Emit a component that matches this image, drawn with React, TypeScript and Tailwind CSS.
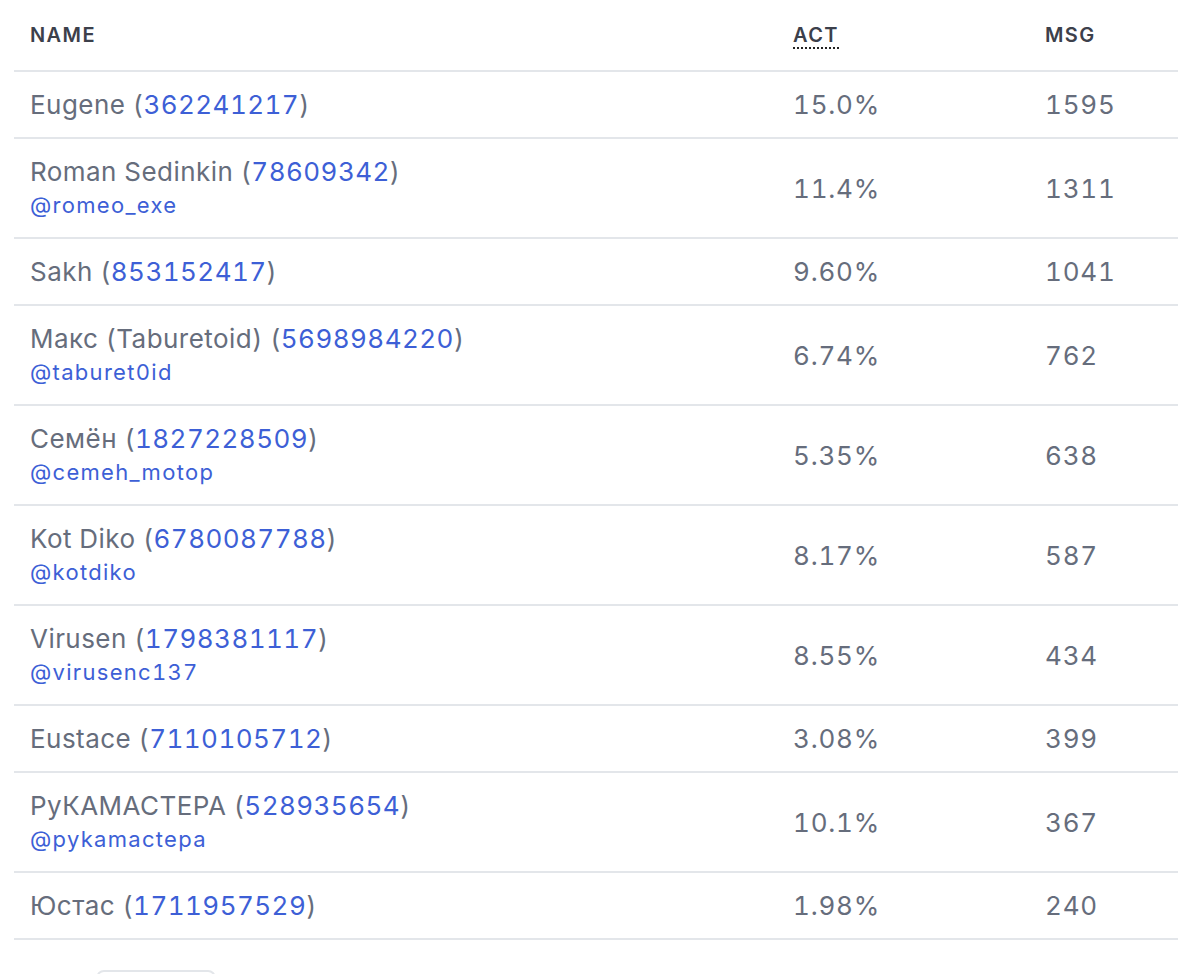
const rows = [
  { name: "Eugene", id: "362241217", act: "15.0%", msg: "1595" },
  { name: "Roman Sedinkin", id: "78609342", handle: "@romeo_exe", act: "11.4%", msg: "1311" },
  { name: "Sakh", id: "853152417", act: "9.60%", msg: "1041" },
  { name: "Макс (Taburetoid)", id: "5698984220", handle: "@taburet0id", act: "6.74%", msg: "762" },
  { name: "Семён", id: "1827228509", handle: "@cemeh_motop", act: "5.35%", msg: "638" },
  { name: "Kot Diko", id: "6780087788", handle: "@kotdiko", act: "8.17%", msg: "587" },
  { name: "Virusen", id: "1798381117", handle: "@virusenc137", act: "8.55%", msg: "434" },
  { name: "Eustace", id: "7110105712", act: "3.08%", msg: "399" },
  { name: "РуКАМАСТЕРА", id: "528935654", handle: "@pykamactepa", act: "10.1%", msg: "367" },
  { name: "Юстас", id: "1711957529", act: "1.98%", msg: "240" },
];

const App = () => {
  return (
    <div className="min-h-screen bg-white pl-[14px] font-['Inter',sans-serif]">
      <table className="w-full border-collapse text-left">
        <thead>
          <tr className="border-b-2 border-[#e3e6ea]">
            <th className="w-[763px] h-[71px] px-4 text-[20px] font-semibold tracking-[0.07em] text-[#3c404b]">NAME</th>
            <th className="w-[252px] px-4 text-[20px] font-semibold tracking-[0.07em] text-[#3c404b]">
              <span className="border-b-2 border-dotted border-[#222]">ACT</span>
            </th>
            <th className="px-4 text-[20px] font-semibold tracking-[0.07em] text-[#3c404b]">MSG</th>
          </tr>
        </thead>
        <tbody>
          {rows.map((r) => (
            <tr key={r.id} className="border-b-2 border-[#e3e6ea] text-[#666d7c] tabular-nums">
              <td className="px-4 py-[15px]">
                <div className="text-[26px] leading-[35px] tracking-[0.45px]">
                  {r.name} (<span className="text-[#3d5fd6]">{r.id}</span>)
                </div>
                {r.handle && (
                  <div className="text-[22px] leading-[33px] tracking-[1.3px] text-[#3d5fd6]">{r.handle}</div>
                )}
              </td>
              <td className="px-4 text-[26px] tracking-[0.8px]">{r.act}</td>
              <td className="px-4 text-[26px] tracking-[0.8px]">{r.msg}</td>
            </tr>
          ))}
        </tbody>
      </table>
      <div className="mt-[30px] pl-[82px]">
        <div className="h-[40px] w-[120px] rounded-lg border-2 border-[#e3e6ea]" />
      </div>
    </div>
  );
};

export default App;
